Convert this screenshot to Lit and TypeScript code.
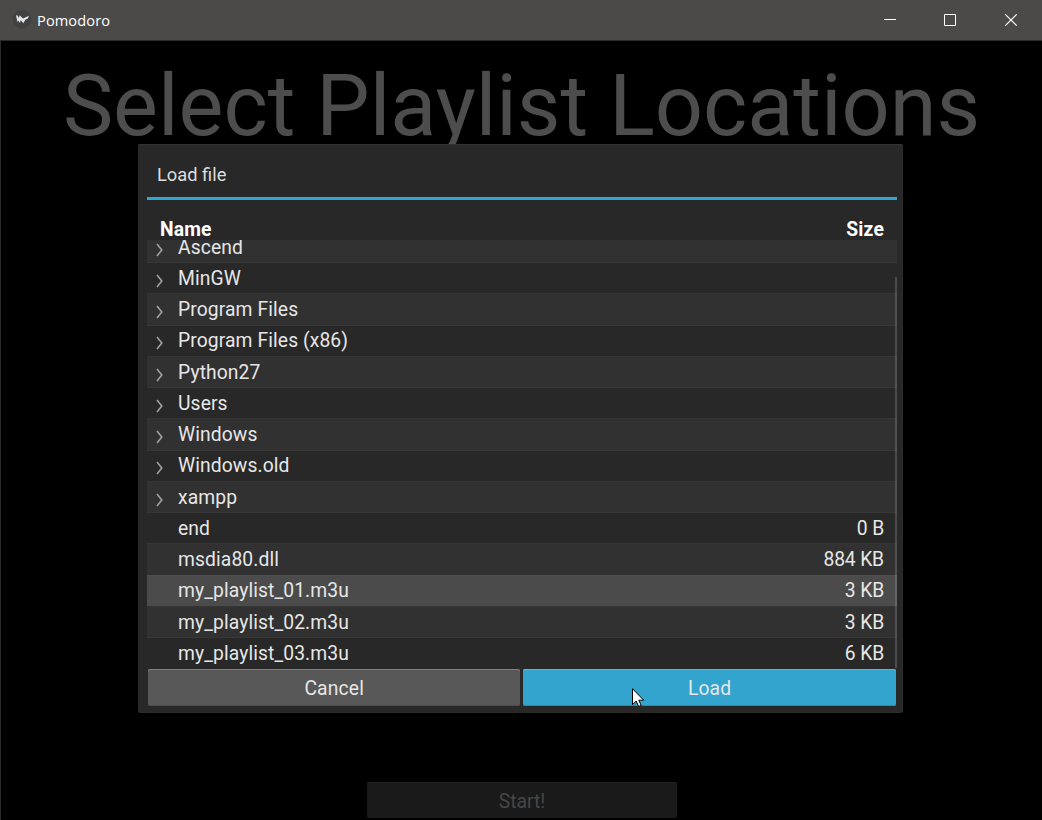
import { LitElement, html, css } from "lit";
import { customElement, property } from "lit/decorators.js";
import { classMap } from "lit/directives/class-map.js";

interface Entry {
  name: string;
  size?: string;
}

const ENTRIES: Entry[] = [
  { name: "Ascend" },
  { name: "MinGW" },
  { name: "Program Files" },
  { name: "Program Files (x86)" },
  { name: "Python27" },
  { name: "Users" },
  { name: "Windows" },
  { name: "Windows.old" },
  { name: "xampp" },
  { name: "end", size: "0 B" },
  { name: "msdia80.dll", size: "884 KB" },
  { name: "my_playlist_01.m3u", size: "3 KB" },
  { name: "my_playlist_02.m3u", size: "3 KB" },
  { name: "my_playlist_03.m3u", size: "6 KB" },
];

@customElement("title-bar")
class TitleBar extends LitElement {
  static styles = css`
    :host {
      display: flex;
      align-items: center;
      height: 40px;
      box-sizing: border-box;
      background: #4c4a48;
      color: #fff;
      font: 14.6px/20px "Open Sans", sans-serif;
    }
    .logo { margin-left: 12px; width: 20px; height: 20px; }
    .name { margin-left: 5px; flex: 1; letter-spacing: 0.1px; }
    .controls { display: flex; }
    .control { width: 60px; height: 40px; display: block; }
    .close { width: 62px; }
  `;
  render() {
    return html`
      <svg class="logo" viewBox="0 0 20 20">
        <circle cx="10" cy="9.2" r="9.3" fill="#404143" />
        <path d="M4 5.4L5.2 5.2L7 8L7.6 5.2L11 8.4L17 5.8L15.8 8.6L13.6 9.4L11.2 13.2L8.8 10L8 13L6.4 10.4L5.6 12.2Z" fill="#e6e6e6" />
      </svg>
      <span class="name">Pomodoro</span>
      <div class="controls">
        <svg class="control" viewBox="0 0 60 40"><path d="M24 19.5h12" stroke="#fff" /></svg>
        <svg class="control" viewBox="0 0 60 40"><path d="M24.5 14.5h11v11h-11z" fill="none" stroke="#fff" /></svg>
        <svg class="control close" viewBox="0 0 62 40"><path d="M25.3 14.3l11.4 11.4M36.7 14.3l-11.4 11.4" stroke="#fff" stroke-width="1.2" /></svg>
      </div>
    `;
  }
}

@customElement("file-row")
class FileRow extends LitElement {
  @property({ attribute: false }) entry!: Entry;
  @property({ type: Boolean }) striped = false;
  @property({ type: Boolean }) selected = false;
  static styles = css`
    :host { display: block; height: 31.25px; flex: none; }
    .row {
      display: flex;
      align-items: center;
      box-sizing: border-box;
      height: 32.25px;
      padding: 1px 13px 0 6px;
    }
    .striped { background: #313131; box-shadow: inset 0 1px 0 #353535, inset 0 -1px 0 #373737; }
    .selected { background: #4b4b4b; box-shadow: inset 0 1px 0 #4e4e4e, inset 0 -1px 0 #505050; }
    .arrow { width: 12px; height: 16px; margin-right: 13px; position: relative; top: 2px; }
    .name { flex: 1; letter-spacing: 0.1px; }
    .size { letter-spacing: -0.15px; }
  `;
  render() {
    const { name, size } = this.entry;
    return html`<div class=${classMap({ row: true, striped: this.striped, selected: this.selected })}>
      <svg class="arrow" viewBox="0 0 12 16">
        ${size ? "" : html`<svg viewBox="0 0 12 16"><path d="M4 2L8.8 8L4 14" fill="none" stroke="#a0a0a0" stroke-width="1.6" /></svg>`}
      </svg>
      <span class="name">${name}</span><span class="size">${size ?? ""}</span>
    </div>`;
  }
}

@customElement("load-dialog")
class LoadDialog extends LitElement {
  static styles = css`
    :host {
      display: flex;
      flex-direction: column;
      box-sizing: border-box;
      width: 765px;
      height: 569px;
      padding: 1px 6px 0 9px;
      border-radius: 3px;
      background: #282828;
      box-shadow: inset 0 1px 1px #363636, inset 0 0 1px 1px #2d2d2d;
      color: #e6e6e6;
      font: 19.3px/22px Roboto, sans-serif;
    }
    .title { height: 52.7px; padding: 19px 0 0 10px; box-sizing: border-box; color: #dedede; font-size: 18.3px; }
    .rule { height: 3px; flex: none; background: #2fa7d4; }
    .head {
      display: flex;
      justify-content: space-between;
      box-sizing: border-box;
      height: 40px;
      padding: 18.6px 13px 0 13px;
      font-weight: 700;
      letter-spacing: 0.15px;
      color: #fff;
    }
    .view { position: relative; height: 428.3px; overflow: hidden; display: flex; flex-direction: column; justify-content: flex-end; }
    .scroll { position: absolute; right: 0; top: 37px; bottom: 0; width: 2.5px; background: rgba(180, 180, 180, 0.25); }
    .actions { display: flex; gap: 3px; padding: 0.4px 1.2px 0 1px; }
    .button {
      flex: 1;
      height: 37px;
      box-sizing: border-box;
      border-radius: 2px;
      text-align: center;
      line-height: 39px;
      letter-spacing: 0.15px;
      background: #585858;
      box-shadow: inset 0 1px 0 #828282, inset 0 -1px 0 #4a4a4a;
    }
    .primary { background: #32a4ce; box-shadow: inset 0 1px 0 #60b6d6, inset 0 -1px 0 #2a8bb0; }
  `;
  render() {
    return html`
      <div class="title">Load file</div>
      <div class="rule"></div>
      <div class="head"><span>Name</span><span>Size</span></div>
      <div class="view">
        ${ENTRIES.map(
          (e, i) => html`<file-row .entry=${e} ?striped=${i % 2 === 0} ?selected=${e.name === "my_playlist_01.m3u"}></file-row>`
        )}
        <div class="scroll"></div>
      </div>
      <div class="actions">
        <div class="button">Cancel</div>
        <div class="button primary">Load</div>
      </div>
    `;
  }
}

@customElement("app-root")
class AppRoot extends LitElement {
  static styles = css`
    :host {
      display: flex;
      flex-direction: column;
      position: relative;
      box-sizing: border-box;
      width: 1042px;
      height: 820px;
      overflow: hidden;
      background: #000;
      font-family: Roboto, sans-serif;
    }
    .page {
      flex: 1;
      display: flex;
      flex-direction: column;
      align-items: center;
      justify-content: space-between;
      border-top: 1px solid #2b2b2b;
      border-left: 1px solid #2b2b2b;
      padding-bottom: 2px;
    }
    .heading { margin-top: 14px; font-size: 84.6px; line-height: 104px; white-space: nowrap; color: #4d4d4d; }
    .start {
      width: 310px;
      height: 36px;
      margin-left: 1px;
      border-radius: 2px;
      background: #1a1a1a;
      box-shadow: inset 0 1px 0 #222;
      color: #464646;
      text-align: center;
      font-size: 19.3px;
      line-height: 39px;
    }
    .dialog { position: absolute; left: 138px; top: 143.5px; }
    .cursor { position: absolute; left: 632px; top: 688px; width: 13px; height: 20px; }
  `;
  render() {
    return html`
      <title-bar></title-bar>
      <div class="page">
        <div class="heading">Select Playlist Locations</div>
        <div class="start">Start!</div>
      </div>
      <load-dialog class="dialog"></load-dialog>
      <svg class="cursor" viewBox="0 0 13 20">
        <path d="M.5 .7V16.6L4.2 13.1L6.7 18.5L9.2 17.4L6.8 12.2H11.7Z" fill="#fff" stroke="#000" />
      </svg>
    `;
  }
}
